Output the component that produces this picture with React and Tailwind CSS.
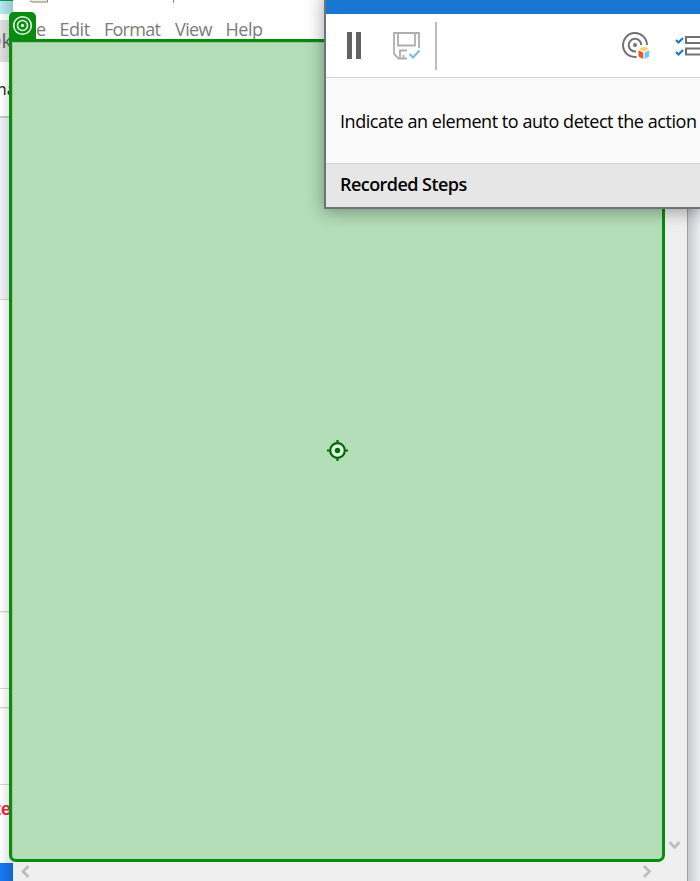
import React from "react";

function BackgroundPage() {
  return (
    <div className="absolute left-0 top-0 flex h-[881px] w-[13px] flex-col overflow-hidden bg-white">
      <div className="h-px shrink-0 bg-[#12a05f]" />
      <div className="h-[13px] shrink-0 bg-[#b4e8f0]" />
      <div className="h-[6px] shrink-0 bg-white" />
      <div className="flex h-[42px] shrink-0 items-center justify-end bg-[#dfdfdf] pr-px">
        <span className="whitespace-nowrap text-[20px] leading-none text-[#666]">Ok</span>
      </div>
      <div className="flex h-[54px] shrink-0 items-center whitespace-nowrap">
        <span className="-ml-[9px] text-[17px] text-[#222]">ma</span>
      </div>
      <div className="h-[2px] shrink-0 bg-[#c9c9cd]" />
      <div className="h-[181px] shrink-0 bg-[#f0f1f6]" />
      <div className="h-px shrink-0 bg-[#d2d2d4]" />
      <div className="h-[311px] shrink-0" />
      <div className="h-[2px] shrink-0 border-t border-[#d8d8dc] bg-[#f0f0f2]" />
      <div className="h-[75px] shrink-0" />
      <div className="h-px shrink-0 bg-[#d8d8dc]" />
      <div className="h-[18px] shrink-0" />
      <div className="h-[2px] shrink-0 border-t border-[#d8d8dc] bg-[#f0f0f2]" />
      <div className="h-[75px] shrink-0" />
      <div className="h-px shrink-0 bg-[#d8d8dc]" />
      <div className="flex h-[78px] shrink-0 justify-end pr-[2px] pt-[11px]">
        <span className="font-['Liberation_Sans',sans-serif] text-[18px] font-bold text-[#f0284a]">te</span>
      </div>
      <div className="h-[18px] shrink-0 bg-[#1877f2]" />
      <div className="absolute inset-0 bg-gradient-to-r from-transparent to-black/15" />
    </div>
  );
}

function EditorWindow() {
  return (
    <div className="absolute left-[13px] top-0 h-[881px] w-[675px] border-r border-[#a1a1a5] bg-[#efefef]">
      <div className="relative h-[42px] overflow-hidden bg-white text-[18px] text-[#7b7b7b]">
        <svg className="absolute left-[17px] top-0" width="19" height="4" viewBox="0 0 19 4">
          <path d="M0 0v1l2 1h15V0" fill="#efefed" />
          <path d="M0 .5l2 1.5h15.5V0" fill="none" stroke="#927e5b" />
        </svg>
        <span className="absolute left-[160px] top-0 h-[3px] w-px bg-[#8c8c8c]" />
        <span className="absolute left-[6px] top-[16px] tracking-[-0.5px]">File</span>
        <span className="absolute left-[46.5px] top-[16px] tracking-[-0.45px]">Edit</span>
        <span className="absolute left-[91px] top-[16px] tracking-[-0.75px]">Format</span>
        <span className="absolute left-[162px] top-[16px] tracking-[-0.6px]">View</span>
        <span className="absolute left-[212.5px] top-[16px] tracking-[-0.5px]">Help</span>
      </div>
      <svg className="absolute left-[6px] top-[864px]" width="12" height="14" viewBox="0 0 12 14">
        <path d="M9.5 2 4 7.5 9.5 13" fill="none" stroke="#bdbdbd" strokeWidth="2.7" />
      </svg>
      <svg className="absolute left-[628px] top-[864px]" width="12" height="14" viewBox="0 0 12 14">
        <path d="M3 2 8.5 7.5 3 13" fill="none" stroke="#bdbdbd" strokeWidth="2.7" />
      </svg>
      <svg className="absolute left-[655px] top-[839px]" width="14" height="12" viewBox="0 0 14 12">
        <path d="M1.5 3 6.5 8.5 11.5 3" fill="none" stroke="#bdbdbd" strokeWidth="2.7" />
      </svg>
    </div>
  );
}

function SelectionOverlay() {
  return (
    <>
      <div className="absolute left-[9px] top-[39px] flex h-[823px] w-[656px] items-center justify-center rounded-b-[7px] rounded-tr-[7px] border-[3px] border-[#078c0e] bg-[#b4deb7] pl-px shadow-[inset_1px_1px_0_#9dc8a0]">
        <svg width="22" height="22" viewBox="0 0 22 22">
          <circle cx="10.5" cy="10.5" r="7.3" fill="#e1f5e2" stroke="#026a0a" strokeWidth="2.2" />
          <circle cx="10.5" cy="10.5" r="2.7" fill="#026a0a" />
          <path d="M10.5 0v4M10.5 17v4M0 10.5h4M17 10.5h4" stroke="#026a0a" strokeWidth="2.2" />
        </svg>
      </div>
      <div className="absolute left-[9px] top-[12px] flex h-[28px] w-[27px] justify-center rounded-t-[5px] bg-[#078c0e] pt-[3px]">
        <svg width="21" height="21" viewBox="0 0 21 21" fill="none" stroke="#e8f8e8">
          <circle cx="10.5" cy="10.5" r="8.8" strokeWidth="1.6" />
          <circle cx="10.5" cy="10.5" r="5" strokeWidth="1.6" />
          <circle cx="10.5" cy="10.5" r="1.7" fill="#e8f8e8" stroke="none" />
        </svg>
      </div>
    </>
  );
}

function SaveIcon() {
  return (
    <svg className="ml-[32px]" width="28" height="28" viewBox="0 0 28 28" fill="none" stroke="#aeaeae" strokeWidth="1.8">
      <path d="M26 16V1H1v21l4.5 4.5H14" />
      <path d="M5 1v12.5h17V1" />
      <path d="M7 26v-7.5h7M10.5 27v-4" />
      <path d="m16.5 22 3.5 3.5 6.5-7" stroke="#82b5ee" strokeWidth="2.2" />
    </svg>
  );
}

function TargetIcon() {
  return (
    <svg className="ml-auto" width="28" height="28" viewBox="0 0 28 28" fill="none">
      <path d="M14.5 25A12 12 0 1 1 25 13" stroke="#717171" strokeWidth="2" />
      <path d="M14 19.3A6.3 6.3 0 1 1 19.3 13" stroke="#717171" strokeWidth="2" />
      <circle cx="13" cy="13" r="2" fill="#717171" />
      <path d="m22 14.5 5 2.5-5 2.5-5-2.5Z" fill="#f7d369" />
      <path d="m16.5 18.3 4.7 2.2V27l-4.7-2.5Z" fill="#ef5423" />
      <path d="m27.2 18.3-4.7 2.2V27l4.7-2.5Z" fill="#6bcaf7" />
    </svg>
  );
}

function ChecklistIcon() {
  return (
    <svg className="ml-[25px] shrink-0" width="26" height="22" viewBox="0 0 26 22" fill="none">
      <path d="m1 5 2.5 2.5L8 3M1 17l2.5 2.5L8 15" stroke="#1976d2" strokeWidth="2.2" />
      <path d="M11 2h16v6H11ZM11 13.5h16v6H11Z" stroke="#717171" strokeWidth="2" />
    </svg>
  );
}

function RecorderWindow() {
  return (
    <div className="absolute left-[324px] top-[-8px] h-[217px] w-[380px] border-b-2 border-l-2 border-[#6b737f] bg-[#f9f9f9] shadow-[0_2px_17px_rgba(0,0,0,0.38)]">
      <div className="h-[22px] bg-[#1976d2]" />
      <div className="flex h-[64px] items-center border-b border-[#d3d3d3] bg-white pl-[21px] pr-[3px]">
        <div className="flex h-[27px] w-[14px] shrink-0 justify-between">
          <span className="w-[5px] bg-[#626262]" />
          <span className="w-[5px] bg-[#626262]" />
        </div>
        <SaveIcon />
        <span className="ml-[14px] h-[48px] w-[2px] shrink-0 bg-[#bcbcbc]" />
        <TargetIcon />
        <ChecklistIcon />
      </div>
      <div className="flex h-[85px] items-center whitespace-nowrap pl-[14px] pt-[2px] text-[18px] tracking-[-0.45px] text-black">
        Indicate an element to auto detect the action
      </div>
      <div className="flex h-[44px] items-center border-t border-[#d2d2d2] bg-[#e6e6e6] pb-[2px] pl-[14px] text-[18px] font-semibold tracking-[-0.55px] text-black">
        Recorded Steps
      </div>
    </div>
  );
}

export default function App() {
  return (
    <main className="relative h-[881px] w-[700px] overflow-hidden bg-[#ecedf2] font-['Open_Sans','Noto_Sans',sans-serif]">
      <div className="absolute left-[688px] top-0 h-[881px] w-[12px] bg-gradient-to-r from-black/15 to-transparent" />
      <BackgroundPage />
      <EditorWindow />
      <SelectionOverlay />
      <RecorderWindow />
    </main>
  );
}
